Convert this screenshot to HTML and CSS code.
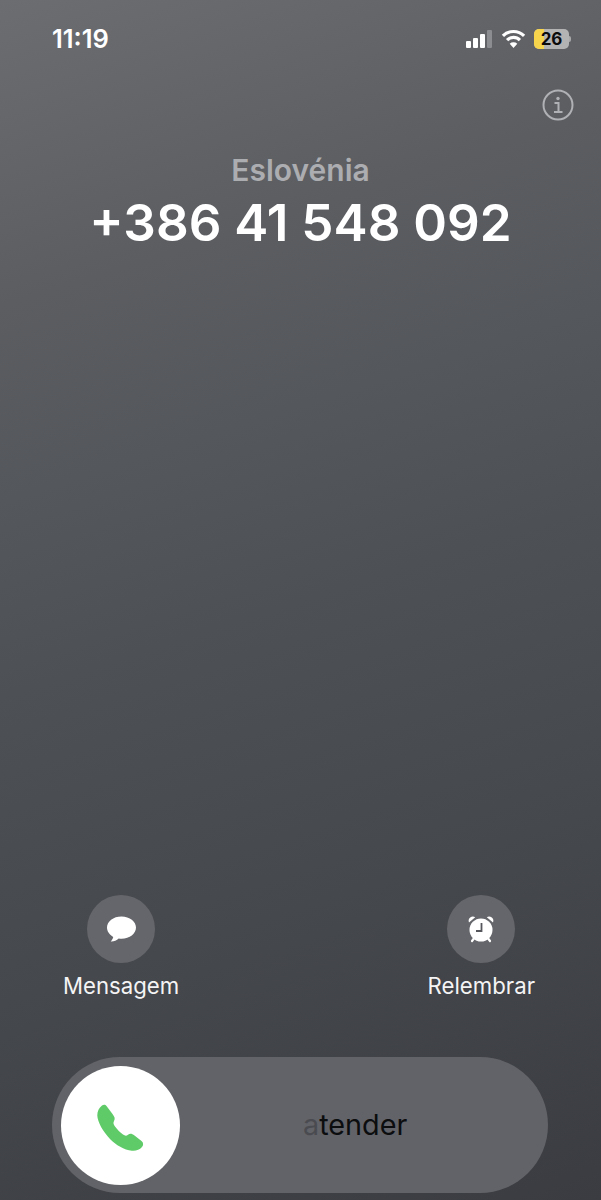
FILE: index.html
```html
<!DOCTYPE html>
<html lang="pt">
<head>
<meta charset="utf-8">
<title>Chamada</title>
<link rel="stylesheet" href="styles.css">
</head>
<body>
<main class="screen">
  <header class="status">
    <span class="time">11:19</span>
    <div class="indicators">
      <div class="signal"><i class="b1"></i><i class="b2"></i><i class="b3"></i><i class="b4"></i></div>
      <svg class="wifi" width="25" height="19" viewBox="0 0 25 19" fill="none" stroke="#fff" stroke-width="3.200"><path d="M1.900 6.900A15 15 0 0 1 23.100 6.900"/><path d="M6.100 11.100A9 9 0 0 1 18.900 11.100"/><path d="M12.500 19L8.700 14.800A5.600 5.600 0 0 1 16.300 14.800z" fill="#fff" stroke="none"/></svg>
      <div class="battery"><div class="cell"><span class="charge"></span><span class="level">26</span></div><span class="nub"></span></div>
    </div>
  </header>
  <div class="info-row">
    <svg width="32" height="32" viewBox="0 0 32 32" fill="none" stroke="#b0b1b4"><circle cx="16" cy="16" r="14.500" stroke-width="2"/><circle cx="16" cy="9.500" r="1.700" fill="#b0b1b4" stroke="none"/><path d="M12.500 14h4v9M12 23h8.500" stroke-width="2"/></svg>
  </div>
  <section class="caller">
    <p class="region">Eslovénia</p>
    <h1 class="number">+386 41 548 092</h1>
  </section>
  <section class="actions">
    <div class="action">
      <div class="action-circle">
        <svg width="29" height="26" viewBox="2 1 28 24.300"><path d="M16 1C8 1 2 5.800 2 11.800c0 3.800 2.400 7 6 9-.3 1.600-1.200 3-2.400 4.300 2.800.2 5.700-.9 7.700-2.800.9.200 1.800.3 2.700.3 8 0 14-4.900 14-10.800S24 1 16 1z" fill="#fff"/></svg>
      </div>
      <span class="action-label">Mensagem</span>
    </div>
    <div class="action">
      <div class="action-circle">
        <svg width="28" height="30" viewBox="1 0 28 30"><path d="M3 8.500a4.300 4.300 0 0 1 6.200-5.300zM27 8.500a4.300 4.300 0 0 0-6.200-5.300z" fill="#fff"/><circle cx="15" cy="16" r="11.500" fill="#fff"/><path d="M7.500 25l-1.500 2M22.500 25l1.500 2" stroke="#fff" stroke-width="2.200" stroke-linecap="round"/><path d="M15.500 9v8H10" fill="none" stroke="#55575c" stroke-width="1.800"/></svg>
      </div>
      <span class="action-label">Relembrar</span>
    </div>
  </section>
  <section class="slider">
    <div class="knob">
      <svg class="phone" width="47" height="47" viewBox="0 0 47 47"><path d="M5 1.600C6.500.3 8.500.5 9.500 2L15.500 10C17.500 12.800 18.500 14.500 17 17C16 19 16.500 20.500 18 22.500C20.500 25.800 23 28.300 26 30.500C28 32 29.600 32 31 30.700C33 29 35 29.500 37.500 31.500L44.500 37C46.500 38.700 46.700 41 45 43C42.500 46 39 47 35 46.700C27 46 19 41 13 35C6 27.500.5 18 .3 11.500C.2 7.500 2 4 5 1.600z" fill="#5fcb68"/></svg>
    </div>
    <span class="slide-text"><span class="fade">a</span>tender</span>
  </section>
</main>
</body>
</html>
```

FILE: styles.css
```css
* { box-sizing: border-box; margin: 0; padding: 0; }
html, body { width: 601px; height: 1200px; overflow: hidden; }
body { font-family: Inter, "Liberation Sans", sans-serif; color: #fff; }
.screen {
  width: 601px; height: 1200px;
  display: flex; flex-direction: column;
  background: linear-gradient(162deg, #6c6d71 0%, #5b5d61 22%, #4d5155 50%, #45484c 72%, #3a3c41 100%);
}
.status {
  height: 76px; padding: 25px 30px 0 52px;
  display: flex; justify-content: space-between; align-items: flex-start;
}
.time { font-size: 25.500px; font-weight: 600; line-height: 27px; color: #fff; }
.indicators { display: flex; align-items: center; height: 27px; }
.signal { display: flex; align-items: flex-end; gap: 2px; height: 18px; margin-right: 9px; }
.signal i { display: block; width: 5px; border-radius: 1px; background: #fff; }
.signal .b1 { height: 7px; }
.signal .b2 { height: 10px; }
.signal .b3 { height: 14px; }
.signal .b4 { height: 18px; background: #8c8d90; }
.wifi { margin-right: 8px; }
.battery { display: flex; align-items: center; gap: 0; }
.cell {
  position: relative; width: 35px; height: 20px; border-radius: 5px;
  background: #b3b3b4; overflow: hidden;
  display: flex; align-items: center; justify-content: center;
}
.charge { position: absolute; left: 0; top: 0; bottom: 0; width: 10px; background: #f6d44c; }
.level { position: relative; color: #0b0b0c; font-size: 17px; font-weight: 700; line-height: 20px; }
.nub { width: 2px; height: 6px; background: #a9a9aa; border-radius: 0 2px 2px 0; }
.info-row { height: 32px; padding-right: 27px; margin-top: 13px; display: flex; justify-content: flex-end; }
.caller { margin-top: 29px; height: 745px; text-align: center; }
.region { font-size: 30px; font-weight: 600; line-height: 36px; color: #acadb0; margin-top: 2px; }
.number { font-size: 51.200px; font-weight: 600; line-height: 60px; color: #fff; margin-top: 4px; }
.actions { display: flex; justify-content: space-between; padding: 0 66px 0 63px; height: 162px; }
.action { display: flex; flex-direction: column; align-items: center; gap: 9px; }
.action-circle {
  width: 68px; height: 68px; border-radius: 50%; background: #65666b;
  display: flex; align-items: center; justify-content: center;
}
.action-label { font-size: 22.200px; line-height: 28px; color: #f4f4f5; }
.slider {
  position: relative; width: 496px; height: 136px; margin-left: 52px;
  border-radius: 68px; background: #626368;
  display: flex; align-items: center; padding-left: 9px;
}
.knob {
  width: 119px; height: 119px; border-radius: 50%; background: #fff;
  display: flex; align-items: center; justify-content: center;
}
.phone { margin-top: 5px; }
.slide-text {
  position: absolute; left: 251px; top: 50px;
  font-size: 28.800px; line-height: 36px; color: #0c0d0f;
}
.fade { color: #4a4b50; }
```
